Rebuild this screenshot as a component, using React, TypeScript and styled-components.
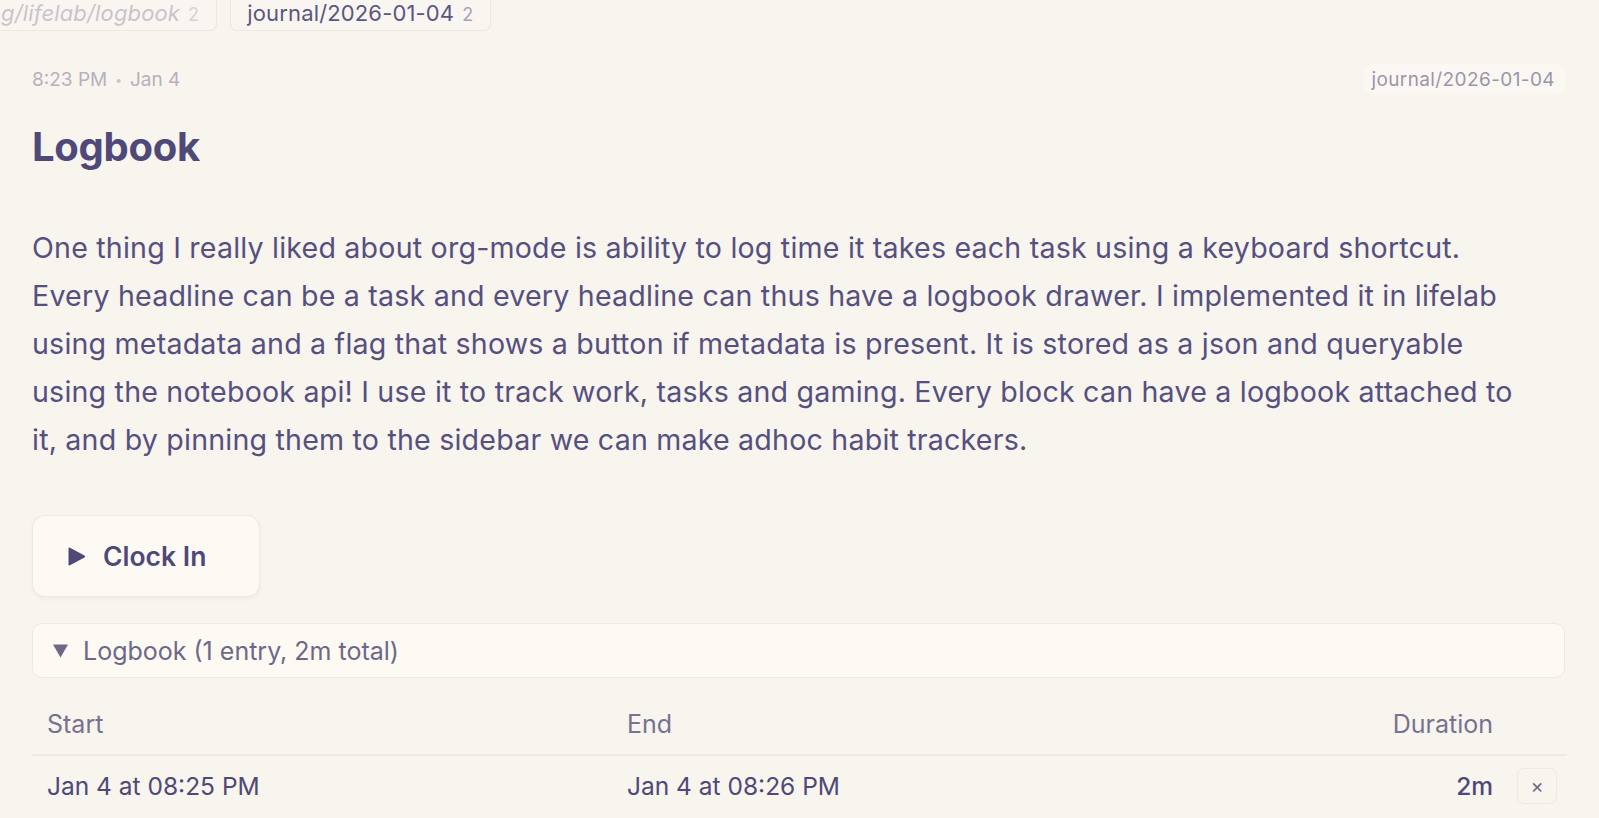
import React from "react";
import styled, { createGlobalStyle } from "styled-components";

const Global = createGlobalStyle`
  html, body { margin: 0; padding: 0; background: #f8f4ee; }
  body { font-family: Inter, "Noto Sans", sans-serif; color: #4f4a7a; overflow: hidden; }
  * { box-sizing: border-box; }
`;

const Page = styled.div`
  width: 1599px;
  height: 818px;
  overflow: hidden;
  background: #f8f4ee;
`;

const TabRow = styled.div`
  display: flex;
  gap: 13px;
  margin-left: -16px;
`;

const Tab = styled.div<{ $faded?: boolean }>`
  display: flex;
  align-items: baseline;
  gap: 8px;
  height: 31px;
  padding: 0 17px 0 16px;
  border: 1px solid #ece7df;
  border-top: none;
  border-radius: 0 0 7px 7px;
  background: #f9f6f1;
  font-size: 22px;
  line-height: 27px;
  color: ${(p) => (p.$faded ? "#c9c4cb" : "#5b567f")};
  font-style: ${(p) => (p.$faded ? "italic" : "normal")};
  letter-spacing: 0.15px;
`;

const TabCount = styled.span<{ $faded?: boolean }>`
  font-size: 18px;
  font-style: normal;
  color: ${(p) => (p.$faded ? "#d8d3d6" : "#a8a4b5")};
`;

const Content = styled.div`
  padding: 0 34px 0 32px;
`;

const MetaRow = styled.div`
  display: flex;
  justify-content: space-between;
  align-items: center;
  margin-top: 33px;
  height: 31px;
`;

const Meta = styled.div`
  font-size: 19px;
  color: #b6b1bd;
  display: flex;
  align-items: center;
  gap: 8px;
`;

const Dot = styled.span`
  font-size: 12px;
  color: #c9c4cc;
`;

const Pill = styled.div`
  font-size: 19px;
  color: #9a95aa;
  background: #fbf8f3;
  border-radius: 10px;
  padding: 0 10px 0 7px;
  height: 31px;
  line-height: 31px;
  letter-spacing: 0.4px;
`;

const Title = styled.h1`
  margin: 28px 0 0 0;
  font-size: 40px;
  line-height: 48px;
  font-weight: 700;
  color: #4e4979;
  letter-spacing: -0.3px;
`;

const Paragraph = styled.p`
  margin: 53px 35px 0 0;
  font-size: 28.6px;
  line-height: 48px;
  letter-spacing: 0.2px;
  color: #55507f;
`;

const ClockButton = styled.button`
  margin-top: 51px;
  display: flex;
  align-items: center;
  gap: 17px;
  width: 228px;
  height: 82px;
  padding: 0 0 0 34px;
  border: 1px solid #eee9e1;
  border-radius: 13px;
  background: #fdfaf4;
  box-shadow: 0 2px 4px rgba(120, 100, 80, 0.06);
  font-family: Inter, "Noto Sans", sans-serif;
  font-size: 26.5px;
  font-weight: 600;
  color: #4e4979;
  cursor: pointer;
`;

const LogbookBar = styled.div`
  margin-top: 26px;
  height: 55px;
  display: flex;
  align-items: center;
  gap: 15px;
  padding-left: 20px;
  border: 1.5px solid #eee9e1;
  border-radius: 10px;
  background: #fdfaf3;
  font-size: 25px;
  color: #6d6889;
`;

const Table = styled.div`
  display: grid;
  grid-template-columns: 580px 1fr auto 59px;
  margin-right: -2px;
`;

const HeadCell = styled.div<{ $right?: boolean }>`
  height: 78px;
  padding: 31px 15px 0 15px;
  font-size: 25px;
  line-height: 30px;
  color: #77728f;
  text-align: ${(p) => (p.$right ? "right" : "left")};
  border-bottom: 2px solid #eee9e2;
`;

const Cell = styled.div<{ $right?: boolean; $strong?: boolean }>`
  height: 64px;
  padding: 15px 15px 0 15px;
  font-size: 24.5px;
  line-height: 30px;
  color: #4e4979;
  font-weight: ${(p) => (p.$strong ? 500 : 400)};
  text-align: ${(p) => (p.$right ? "right" : "left")};
`;

const ActionCell = styled.div`
  padding: 12px 0 0 9px;
`;

const RemoveButton = styled.button`
  width: 40px;
  height: 36px;
  border: 1.5px solid #eee9e2;
  border-radius: 7px;
  background: transparent;
  color: #6f6a8a;
  font-family: Inter, sans-serif;
  font-size: 20px;
  line-height: 1;
  padding: 0;
  display: flex;
  align-items: center;
  justify-content: center;
`;

const Play = () => (
  <svg width="19" height="19" viewBox="0 0 19 19">
    <path d="M1.5 1.5 Q1.5 0 3 0.8 L17.5 8.5 Q18.8 9.5 17.5 10.5 L3 18.2 Q1.5 19 1.5 17.5 Z" fill="#4e4979" />
  </svg>
);

const Down = () => (
  <svg width="15" height="14" viewBox="0 0 15 14">
    <path d="M0 0.5 L15 0.5 L7.5 13.5 Z" fill="#6d6889" />
  </svg>
);

export default function App() {
  return (
    <Page>
      <Global />
      <TabRow>
        <Tab $faded>
          g/lifelab/logbook<TabCount $faded>2</TabCount>
        </Tab>
        <Tab>
          journal/2026-01-04<TabCount>2</TabCount>
        </Tab>
      </TabRow>
      <Content>
        <MetaRow>
          <Meta>
            8:23 PM <Dot>•</Dot> Jan 4
          </Meta>
          <Pill>journal/2026-01-04</Pill>
        </MetaRow>
        <Title>Logbook</Title>
        <Paragraph>
          One thing I really liked about org-mode is ability to log time it takes each task using a keyboard shortcut.
          <br />
          Every headline can be a task and every headline can thus have a logbook drawer. I implemented it in lifelab
          using metadata and a flag that shows a button if metadata is present. It is stored as a json and queryable
          using the notebook api! I use it to track work, tasks and gaming. Every block can have a logbook attached to
          it, and by pinning them to the sidebar we can make adhoc habit trackers.
        </Paragraph>
        <ClockButton>
          <Play />
          Clock In
        </ClockButton>
        <LogbookBar>
          <Down />
          Logbook (1 entry, 2m total)
        </LogbookBar>
        <Table>
          <HeadCell>Start</HeadCell>
          <HeadCell>End</HeadCell>
          <HeadCell $right>Duration</HeadCell>
          <HeadCell />
          <Cell>Jan 4 at 08:25 PM</Cell>
          <Cell>Jan 4 at 08:26 PM</Cell>
          <Cell $right $strong>2m</Cell>
          <ActionCell>
            <RemoveButton>×</RemoveButton>
          </ActionCell>
        </Table>
      </Content>
    </Page>
  );
}
